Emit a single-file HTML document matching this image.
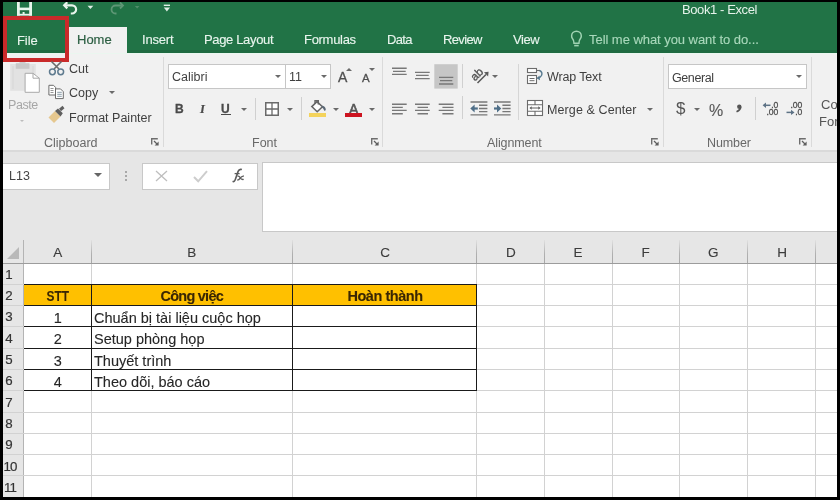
<!DOCTYPE html>
<html><head><meta charset="utf-8">
<style>
*{margin:0;padding:0;box-sizing:border-box}
html,body{width:840px;height:500px;overflow:hidden;background:#000}
body{position:relative;font-family:"Liberation Sans",sans-serif}
.a{position:absolute}
.t{position:absolute;white-space:nowrap;line-height:1;will-change:transform}
#green{left:2px;top:2px;width:835px;height:50.5px;background:#217346}
#ribbon{left:2px;top:52.5px;width:835px;height:97.5px;background:#f1f1f1}
#rbline{left:2px;top:149.5px;width:835px;height:2px;background:#dadada}
#fbar{left:2px;top:151.5px;width:835px;height:112px;background:#e6e6e6}
#grid{left:24px;top:263px;width:813px;height:234px;background:#fff}
#rowh{left:2px;top:263px;width:22px;height:234px;background:#e6e6e6}
.tab{color:#e9f5ee;font-size:13px;-webkit-text-stroke:0.12px #e9f5ee}
.grp{color:#686868;font-size:12.5px}
.rt{color:#3f3f3f;font-size:12.5px}
.sep{position:absolute;width:1px;background:#dadada}
.arr{position:absolute;width:0;height:0;border-left:3px solid transparent;border-right:3px solid transparent;border-top:3px solid #6a6a6a}
.box{position:absolute;background:#fff;border:1px solid #c6c6c6}
.hl{position:absolute;height:1px}
.vl{position:absolute;width:1px}
.ch{color:#3c3c3c;font-size:13.5px;-webkit-text-stroke:0.12px #3c3c3c}
.rh{color:#333;font-size:13.3px;-webkit-text-stroke:0.2px #333}
.cell{color:#262626;font-size:14.5px;-webkit-text-stroke:0.1px #262626}
</style></head><body>
<div class="a" id="green"></div>
<div class="a" id="ribbon"></div>
<div class="a" style="left:2px;top:50px;width:835px;height:2.5px;background:#1f6a41"></div>
<div class="a" style="left:2px;top:52.5px;width:835px;height:1.5px;background:#eaf6ef"></div>
<div class="a" id="rbline"></div>
<div class="a" id="fbar"></div>
<div class="a" id="rowh"></div>
<div class="a" id="grid"></div>

<!-- Quick access toolbar -->
<svg class="a" style="left:0;top:0" width="180" height="18" viewBox="0 0 180 18">
  <g fill="#e8f5ec">
    <rect x="17" y="2" width="2.8" height="13.6"/>
    <rect x="29.2" y="2" width="2.8" height="13.6"/>
    <rect x="17" y="7.6" width="15" height="2.6"/>
    <rect x="17" y="13.8" width="15" height="1.8"/>
    <rect x="22.6" y="12" width="2" height="2"/>
  </g>
  <path d="M64.5 5.3 H72 A4.1 4.1 0 0 1 72 13.5 H70.8" fill="none" stroke="#e8f5ec" stroke-width="2.2"/>
  <path d="M67.3 2.2 L64.2 5.3 L67.3 8.4" fill="none" stroke="#e8f5ec" stroke-width="2.2"/>
  <path d="M87.5 5.8 H93.3 L90.4 8.9 Z" fill="#e0efe6"/>
  <path d="M122.5 5.5 H115.5 A4 4 0 0 0 115.5 13.5 H116.5" fill="none" stroke="#5d9775" stroke-width="1.8"/>
  <path d="M120 2.5 L123 5.5 L120 8.5" fill="none" stroke="#5d9775" stroke-width="1.8"/>
  <path d="M134.8 6 H139.5 L137.15 8.5 Z" fill="#4f8d69"/>
  <rect x="163.8" y="4.6" width="6.2" height="1.4" fill="#e0efe6"/>
  <path d="M163.8 7.5 H170 L166.9 11.6 Z" fill="#e0efe6"/>
</svg>
<div class="t" style="left:681.5px;top:3px;font-size:13px;color:#e6f3eb;letter-spacing:-0.4px">Book1 - Excel</div>

<!-- Tabs -->
<div class="a" style="left:68px;top:27px;width:59px;height:26px;background:#f1f1f1"></div>
<div class="t tab" style="left:17px;top:34.3px;letter-spacing:-0.1px">File</div>
<div class="t tab" style="left:77px;top:33px;color:#2d5f43;-webkit-text-stroke:0.2px #2d5f43">Home</div>
<div class="t tab" style="left:142px;top:33px;letter-spacing:-0.2px">Insert</div>
<div class="t tab" style="left:203.5px;top:33px;letter-spacing:-0.35px">Page Layout</div>
<div class="t tab" style="left:304px;top:33px;letter-spacing:-0.3px">Formulas</div>
<div class="t tab" style="left:386.5px;top:33px;letter-spacing:-0.7px">Data</div>
<div class="t tab" style="left:442.5px;top:33px;letter-spacing:-0.65px">Review</div>
<div class="t tab" style="left:513px;top:33px;letter-spacing:-0.45px">View</div>
<svg class="a" style="left:566px;top:28px" width="20" height="22" viewBox="566 28 20 22">
  <path d="M574 43.3 Q574 40.5 572.6 38.8 Q571.6 37.4 571.6 36 A4.85 4.85 0 0 1 581.3 36 Q581.3 37.4 580.3 38.8 Q578.9 40.5 578.9 43.3 Z" fill="none" stroke="#9fd3b2" stroke-width="1.5"/>
  <path d="M574.2 45.6 H578.7" stroke="#9fd3b2" stroke-width="1.6"/>
</svg>
<div class="t tab" style="left:588.5px;top:33px;color:#a9d8bb;-webkit-text-stroke:0.12px #a9d8bb;letter-spacing:-0.05px">Tell me what you want to do...</div>

<!-- Red highlight box -->
<div class="a" style="left:3px;top:16px;width:66px;height:46px;border:4.5px solid #c92a2a"></div>

<!-- Clipboard group -->
<svg class="a" style="left:0;top:56px" width="68" height="72" viewBox="0 56 68 72">
  <rect x="10.2" y="64" width="25.6" height="26.8" fill="#e2e2e2"/>
  <path d="M13 66 V89 M33 66 V89" stroke="#d6d6d6" stroke-width="1"/>
  <rect x="15.8" y="63.2" width="13.6" height="5.6" fill="#c9c9c9"/>
  <rect x="19.5" y="62" width="6" height="2" fill="#cdcdcd"/>
  <path d="M25.1 73.3 H33 L39.3 78.2 V92.3 H25.1 Z" fill="#fff" stroke="#a9a9a9" stroke-width="1"/>
  <path d="M33 73.3 V78.2 H39.3" fill="none" stroke="#a9a9a9" stroke-width="1"/>
  <path d="M51.5 61.5 L59 69 M61.5 61.5 L54 69" stroke="#6b6b6b" stroke-width="1.6"/>
  <circle cx="52.4" cy="71.8" r="2.9" fill="none" stroke="#5f7b8f" stroke-width="1.5"/>
  <circle cx="60.7" cy="71.8" r="2.9" fill="none" stroke="#5f7b8f" stroke-width="1.5"/>
  <path d="M48.9 85.3 H53.5 L55.6 87.4 V95 H48.9 Z" fill="#fff" stroke="#6b6b6b" stroke-width="1"/>
  <path d="M50.5 88.5 H53.5 M50.5 90.5 H53.5 M50.5 92.5 H53.5" stroke="#8a8a8a" stroke-width="0.9"/>
  <path d="M55.5 88.9 H60.5 L63.3 91.7 V98.6 H55.5 Z" fill="#fff" stroke="#6b6b6b" stroke-width="1"/>
  <path d="M57.2 92.3 H61.8 M57.2 94.3 H61.8 M57.2 96.3 H61.8" stroke="#7a8e9c" stroke-width="0.9"/>
  <path d="M48.5 117.5 L55 111 L60.5 116.5 L54 123 Z" fill="#e6c88f"/>
  <path d="M55 111 L58 108.5 L62.8 113.3 L60.5 116.5 Z" fill="#5f5f5f"/>
  <path d="M60 110 L63.5 107" stroke="#5f5f5f" stroke-width="3"/>
</svg>
<div class="t" style="left:8px;top:99px;font-size:12.5px;color:#a6a6a6;letter-spacing:-0.45px">Paste</div>
<div class="arr" style="left:19.5px;top:119.5px;border-left-width:2.5px;border-right-width:2.5px;border-top-width:2.2px;border-top-color:#bdbdbd"></div>

<div class="t rt" style="left:68.5px;top:62.5px">Cut</div>

<div class="t rt" style="left:68.5px;top:87px">Copy</div>
<div class="arr" style="left:109px;top:91px"></div>

<div class="t rt" style="left:68.5px;top:111.5px">Format Painter</div>
<div class="t grp" style="left:43.5px;top:137px">Clipboard</div>
<svg class="a" style="left:151px;top:138.3px" width="8" height="8" viewBox="0 0 8 8">
  <path d="M0.7 6.5 V0.7 H6.8" fill="none" stroke="#6e6e6e" stroke-width="1.4"/>
  <path d="M3 3 L6.5 6.5" stroke="#5e5e5e" stroke-width="1.3"/><path d="M7.6 3.6 V7.6 H3.6 Z" fill="#5e5e5e"/>
</svg>
<div class="sep" style="left:163px;top:57px;height:90px"></div>

<!-- Font group -->
<div class="box" style="left:168px;top:64px;width:118px;height:25px"></div>
<div class="t rt" style="left:172px;top:71px">Calibri</div>
<div class="arr" style="left:275px;top:75px"></div>
<div class="box" style="left:285px;top:64px;width:46px;height:25px"></div>
<div class="t rt" style="left:289px;top:71px">11</div>
<div class="arr" style="left:321px;top:75px"></div>
<div class="t" style="left:338px;top:70px;font-size:14px;color:#4f4f4f;-webkit-text-stroke:0.3px #4f4f4f">A</div>
<div class="arr" style="left:346px;top:68px;border-top:0;border-bottom:3px solid #6a6a6a"></div>
<div class="t" style="left:362px;top:72.5px;font-size:11.5px;color:#4f4f4f;-webkit-text-stroke:0.3px #4f4f4f">A</div>
<div class="arr" style="left:369px;top:68px"></div>
<div class="sep" style="left:382px;top:57px;height:90px"></div>

<div class="t" style="left:174.5px;top:102.5px;font-size:12px;font-weight:bold;color:#4a4a4a;-webkit-text-stroke:0.3px #4a4a4a">B</div>
<div class="t" style="left:199.5px;top:102.5px;font-size:12.5px;font-style:italic;font-family:'Liberation Serif',serif;font-weight:bold;color:#4a4a4a;-webkit-text-stroke:0.2px #4a4a4a">I</div>
<div class="t" style="left:221px;top:102.5px;font-size:12px;font-weight:bold;color:#4a4a4a;-webkit-text-stroke:0.3px #4a4a4a">U</div><div class="a" style="left:221px;top:114px;width:10px;height:1.3px;background:#4a4a4a"></div>
<div class="arr" style="left:241px;top:108px"></div>
<div class="sep" style="left:255px;top:98px;height:22px;background:#d0d0d0"></div>
<svg class="a" style="left:265px;top:102px" width="14" height="14" viewBox="0 0 14 14">
  <rect x="0.75" y="0.75" width="12.5" height="12.5" fill="#fff" stroke="#6a6a6a" stroke-width="1.5"/>
  <path d="M7 1 V13 M1 7 H13" stroke="#6a6a6a" stroke-width="1.3"/>
</svg>
<div class="arr" style="left:287px;top:108px"></div>
<div class="sep" style="left:301px;top:97px;height:23px;background:#d0d0d0"></div>
<svg class="a" style="left:305px;top:96px" width="26" height="24" viewBox="305 96 26 24">
  <path d="M311.8 106.6 L317 101.6 L322.4 106.8 L317.2 111.8 Z" fill="#fff" stroke="#666" stroke-width="1.5"/>
  <path d="M315 104 V100.8 H318.3 V104.4" fill="none" stroke="#666" stroke-width="1.4"/>
  <path d="M321.5 105.4 Q325.5 106 325.8 109.5 Q325.6 111 324.3 110.8 Q323.5 108.5 322 107.5 Z" fill="#5a6774"/>
  <rect x="309" y="113" width="17" height="4" fill="#f4d35c"/>
</svg>
<div class="arr" style="left:333px;top:108px"></div>
<div class="t" style="left:348.5px;top:101.5px;font-size:14px;color:#555;-webkit-text-stroke:0.6px #555">A</div>
<div class="a" style="left:345px;top:113.4px;width:17px;height:3.8px;background:#cc1420"></div>
<div class="arr" style="left:369px;top:108px"></div>
<div class="t grp" style="left:252px;top:136.5px">Font</div>
<svg class="a" style="left:371px;top:138.3px" width="8" height="8" viewBox="0 0 8 8">
  <path d="M0.7 6.5 V0.7 H6.8" fill="none" stroke="#6e6e6e" stroke-width="1.4"/>
  <path d="M3 3 L6.5 6.5" stroke="#5e5e5e" stroke-width="1.3"/><path d="M7.6 3.6 V7.6 H3.6 Z" fill="#5e5e5e"/>
</svg>

<!-- Alignment -->
<svg class="a" style="left:386px;top:60px" width="130" height="60" viewBox="386 60 130 60">
  <rect x="434.3" y="64.2" width="23.4" height="24.4" fill="#c6c6c6"/>
  <g stroke="#787878" stroke-width="1.35">
    <path d="M392 68.2 H406.7 M393 71.4 H405.7 M392 74.4 H406.7"/>
    <path d="M415 72.4 H429.7 M416 75.4 H428.7 M415 78.6 H429.7"/>
    <path d="M439 77.4 H453.3 M440 80.6 H452.3 M439 84 H453.3"/>
    <path d="M392 104.2 H406.7 M392 107.4 H402.8 M392 110.4 H406.7 M392 113.7 H402.8"/>
    <path d="M415 104.2 H429.7 M417.5 107.4 H428 M415 110.4 H429.7 M417.5 113.7 H428"/>
    <path d="M438.7 104.2 H453.5 M442.4 107.4 H453.5 M438.7 110.4 H453.5 M442.4 113.7 H453.5"/>
    <path d="M470.5 102 H487.4 M479 105.2 H487.4 M479 108.5 H487.4 M479 111.6 H487.4 M470.5 114.9 H487.4"/>
    <path d="M494 102 H510.6 M502.4 105.2 H510.6 M502.4 108.5 H510.6 M502.4 111.6 H510.6 M494 114.9 H510.6"/>
  </g>
  <path d="M472.5 108.5 H477.8" stroke="#4f6f88" stroke-width="2.2"/>
  <path d="M470.3 108.5 L474.6 104.6 V112.4 Z" fill="#4f6f88"/>
  <path d="M494 108.5 H499" stroke="#4f6f88" stroke-width="2.2"/>
  <path d="M501.3 108.5 L497 104.6 V112.4 Z" fill="#4f6f88"/>
</svg>
<div class="sep" style="left:462px;top:64px;height:24px;background:#d0d0d0"></div>
<div class="sep" style="left:462px;top:96px;height:23px;background:#d0d0d0"></div>
<svg class="a" style="left:466px;top:62px" width="26" height="26" viewBox="466 62 26 26">
  <text x="476.8" y="78" font-size="11.5" font-family="Liberation Sans" fill="#505050" stroke="#505050" stroke-width="0.35" text-anchor="middle" transform="rotate(-45 476.8 74.2)">ab</text>
  <path d="M477.5 83 L486 74.5" stroke="#5a5a5a" stroke-width="1.6"/>
  <path d="M484 72.3 L488.6 71.8 L488.1 76.4 Z" fill="#5a5a5a"/>
</svg>
<div class="arr" style="left:492px;top:75px"></div>
<div class="sep" style="left:518px;top:64px;height:56px;background:#d6d6d6"></div>
<svg class="a" style="left:522px;top:64px" width="24" height="56" viewBox="522 64 24 56">
  <rect x="527.5" y="68.5" width="9" height="4" fill="#fff" stroke="#6c6c6c" stroke-width="1.1"/>
  <path d="M536.5 70.5 H540" stroke="#6c6c6c" stroke-width="1.1"/>
  <rect x="527.5" y="75.5" width="9" height="8" fill="#fff" stroke="#6c6c6c" stroke-width="1.1"/>
  <path d="M529.5 78.5 H534.5 M529.5 80.7 H534.5" stroke="#6c6c6c" stroke-width="1"/>
  <path d="M539.5 70.5 Q543 72 541.5 75.5 Q540.5 77.5 537.5 78.2" fill="none" stroke="#56798f" stroke-width="1.4"/>
  <path d="M536.6 78.3 L539.5 75.6 L540 80.3 Z" fill="#56798f"/>
  <rect x="527.5" y="100.5" width="15" height="15" fill="#fff" stroke="#6c6c6c" stroke-width="1.1"/>
  <path d="M527.5 104.7 H542.5 M527.5 111.3 H542.5 M535 100.5 V104.7 M535 111.3 V115.5" stroke="#6c6c6c" stroke-width="1.1"/>
  <path d="M530 108 H540" stroke="#6c6c6c" stroke-width="1.1"/>
  <path d="M529.3 108 L531.8 106.2 V109.8 Z M540.7 108 L538.2 106.2 V109.8 Z" fill="#6c6c6c"/>
</svg>
<div class="t rt" style="left:547px;top:71px;letter-spacing:-0.15px">Wrap Text</div>

<div class="t rt" style="left:546.5px;top:103.5px;letter-spacing:0.1px">Merge &amp; Center</div>
<div class="arr" style="left:647px;top:108px"></div>
<div class="t grp" style="left:487px;top:136.5px;letter-spacing:-0.1px">Alignment</div>
<svg class="a" style="left:651px;top:138.3px" width="8" height="8" viewBox="0 0 8 8">
  <path d="M0.7 6.5 V0.7 H6.8" fill="none" stroke="#6e6e6e" stroke-width="1.4"/>
  <path d="M3 3 L6.5 6.5" stroke="#5e5e5e" stroke-width="1.3"/><path d="M7.6 3.6 V7.6 H3.6 Z" fill="#5e5e5e"/>
</svg>
<div class="sep" style="left:663px;top:57px;height:90px"></div>

<!-- Number -->
<div class="box" style="left:668px;top:64px;width:139px;height:25px"></div>
<div class="t rt" style="left:672px;top:71.5px;letter-spacing:-0.4px">General</div>
<div class="arr" style="left:796px;top:75px"></div>
<div class="t" style="left:675.5px;top:100px;font-size:17px;color:#555;-webkit-text-stroke:0px #555">$</div>
<div class="arr" style="left:694px;top:108px"></div>
<div class="t" style="left:709px;top:102.5px;font-size:16px;color:#5a5a5a;-webkit-text-stroke:0.15px #5a5a5a">%</div>
<svg class="a" style="left:734px;top:103px" width="9" height="10" viewBox="734 103 9 10"><circle cx="739.3" cy="106.8" r="2.2" fill="#555"/><path d="M740.6 106.8 Q740.8 110 736.5 111.8" fill="none" stroke="#555" stroke-width="1.7"/></svg>
<div class="sep" style="left:755px;top:97px;height:23px;background:#d0d0d0"></div>
<svg class="a" style="left:756px;top:96px" width="54" height="26" viewBox="756 96 54 26">
  <g font-family="Liberation Sans" font-size="8.6" fill="#4f4f4f" stroke="#4f4f4f" stroke-width="0.3" text-anchor="end">
    <text x="778.4" y="108">.0</text>
    <text x="778.4" y="115.4">.00</text>
    <text x="802.4" y="108">.00</text>
    <text x="802.4" y="115.4">.0</text>
  </g>
  <path d="M764.5 105.3 H770.5" stroke="#5d7285" stroke-width="1.5"/>
  <path d="M762.6 105.3 L766 102.6 V108 Z" fill="#5d7285"/>
  <path d="M786.5 112.4 H792.5" stroke="#5d7285" stroke-width="1.5"/>
  <path d="M794.5 112.4 L791 109.7 V115.1 Z" fill="#5d7285"/>
</svg>
<div class="t grp" style="left:707px;top:137px;letter-spacing:-0.1px">Number</div>
<svg class="a" style="left:799px;top:138.3px" width="8" height="8" viewBox="0 0 8 8">
  <path d="M0.7 6.5 V0.7 H6.8" fill="none" stroke="#6e6e6e" stroke-width="1.4"/>
  <path d="M3 3 L6.5 6.5" stroke="#5e5e5e" stroke-width="1.3"/><path d="M7.6 3.6 V7.6 H3.6 Z" fill="#5e5e5e"/>
</svg>
<div class="sep" style="left:811px;top:57px;height:90px"></div>
<div class="t rt" style="left:821px;top:98px;font-size:13px;color:#555">Co</div>
<div class="t rt" style="left:819px;top:115px;font-size:13px;color:#555">For</div>

<!-- Formula bar -->
<div class="box" style="left:2px;top:162.5px;width:108px;height:27px;border-color:#c8c8c8;border-left:0"></div>
<div class="t" style="left:9px;top:170px;font-size:12.5px;color:#444">L13</div>
<div class="arr" style="left:94px;top:173px;border-left-width:4px;border-right-width:4px;border-top-width:4px;border-top-color:#666"></div>
<div class="a" style="left:125px;top:171px;width:2px;height:2px;background:#a8a8a8"></div>
<div class="a" style="left:125px;top:175px;width:2px;height:2px;background:#a8a8a8"></div>
<div class="a" style="left:125px;top:179px;width:2px;height:2px;background:#a8a8a8"></div>
<div class="box" style="left:141.5px;top:162.5px;width:116px;height:27px;border-color:#c8c8c8"></div>
<svg class="a" style="left:155px;top:170px" width="13" height="12" viewBox="0 0 13 12">
  <path d="M1 1 L12 11 M12 1 L1 11" stroke="#bebebe" stroke-width="1.3"/>
</svg>
<svg class="a" style="left:193px;top:170px" width="15" height="13" viewBox="0 0 15 13">
  <path d="M1 7 L5.2 11.3 L14 1.2" fill="none" stroke="#cdcdcd" stroke-width="2"/>
</svg>
<svg class="a" style="left:226px;top:164px" width="24" height="22" viewBox="226 164 24 22">
  <path d="M232.6 181.3 Q234.4 182.3 235.3 179.6 L238.1 171.4 Q239.2 168.6 241.9 169.6" fill="none" stroke="#5c5c5c" stroke-width="1.6"/>
  <path d="M234.6 173.6 H239.6" stroke="#5c5c5c" stroke-width="1.3"/>
  <path d="M237.4 176.2 Q239.2 175.6 240.1 177.6 Q241.1 179.9 243.7 179.4" fill="none" stroke="#5c5c5c" stroke-width="1.3"/>
  <path d="M243.9 175.9 Q241.3 176.4 240.1 178.1 Q239.1 179.9 237.2 180.1" fill="none" stroke="#5c5c5c" stroke-width="1.3"/>
</svg>
<div class="box" style="left:262px;top:162px;width:576px;height:69.5px;border-color:#c8c8c8"></div>

<!-- Column headers -->
<div class="a" style="left:2px;top:240px;width:835px;height:23px;background:#e6e6e6"></div>
<svg class="a" style="left:7px;top:247px" width="13" height="13" viewBox="0 0 13 13"><path d="M12 0 V12 H0 Z" fill="#b9b9b9"/></svg>
<div class="vl" style="left:23px;top:240px;height:257px;background:#b4b4b4"></div>
<div class="hl" style="left:2px;top:263px;width:835px;background:#9c9c9c"></div>

<!-- gridlines vertical -->
<div class="vl" style="left:91px;top:240px;height:23px;background:linear-gradient(#e0e0e0,#b0b0b0 60%,#a8a8a8)"></div>
<div class="vl" style="left:292px;top:240px;height:23px;background:linear-gradient(#e0e0e0,#b0b0b0 60%,#a8a8a8)"></div>
<div class="vl" style="left:476px;top:240px;height:23px;background:linear-gradient(#e0e0e0,#b0b0b0 60%,#a8a8a8)"></div>
<div class="vl" style="left:544px;top:240px;height:23px;background:linear-gradient(#e0e0e0,#b0b0b0 60%,#a8a8a8)"></div>
<div class="vl" style="left:612px;top:240px;height:23px;background:linear-gradient(#e0e0e0,#b0b0b0 60%,#a8a8a8)"></div>
<div class="vl" style="left:679px;top:240px;height:23px;background:linear-gradient(#e0e0e0,#b0b0b0 60%,#a8a8a8)"></div>
<div class="vl" style="left:747px;top:240px;height:23px;background:linear-gradient(#e0e0e0,#b0b0b0 60%,#a8a8a8)"></div>
<div class="vl" style="left:815px;top:240px;height:23px;background:linear-gradient(#e0e0e0,#b0b0b0 60%,#a8a8a8)"></div>

<div class="vl" style="left:91px;top:264px;height:233px;background:#d2d2d2"></div>
<div class="vl" style="left:292px;top:264px;height:233px;background:#d2d2d2"></div>
<div class="vl" style="left:476px;top:264px;height:233px;background:#d2d2d2"></div>
<div class="vl" style="left:544px;top:264px;height:233px;background:#d2d2d2"></div>
<div class="vl" style="left:612px;top:264px;height:233px;background:#d2d2d2"></div>
<div class="vl" style="left:679px;top:264px;height:233px;background:#d2d2d2"></div>
<div class="vl" style="left:747px;top:264px;height:233px;background:#d2d2d2"></div>
<div class="vl" style="left:815px;top:264px;height:233px;background:#d2d2d2"></div>

<!-- gridlines horizontal -->
<div class="hl" style="left:2px;top:284px;width:835px;background:#d2d2d2"></div>
<div class="hl" style="left:2px;top:305px;width:835px;background:#d2d2d2"></div>
<div class="hl" style="left:2px;top:326px;width:835px;background:#d2d2d2"></div>
<div class="hl" style="left:2px;top:348px;width:835px;background:#d2d2d2"></div>
<div class="hl" style="left:2px;top:369px;width:835px;background:#d2d2d2"></div>
<div class="hl" style="left:2px;top:390px;width:835px;background:#d2d2d2"></div>
<div class="hl" style="left:2px;top:412px;width:835px;background:#d2d2d2"></div>
<div class="hl" style="left:2px;top:433px;width:835px;background:#d2d2d2"></div>
<div class="hl" style="left:2px;top:454px;width:835px;background:#d2d2d2"></div>
<div class="hl" style="left:2px;top:475px;width:835px;background:#d2d2d2"></div>

<!-- Header texts -->
<div class="t ch" style="left:23.5px;width:67.5px;text-align:center;top:246px">A</div>
<div class="t ch" style="left:91.0px;width:201.5px;text-align:center;top:246px">B</div>
<div class="t ch" style="left:292.5px;width:184.0px;text-align:center;top:246px">C</div>
<div class="t ch" style="left:476.5px;width:67.5px;text-align:center;top:246px">D</div>
<div class="t ch" style="left:544.0px;width:68.0px;text-align:center;top:246px">E</div>
<div class="t ch" style="left:612.0px;width:67.3px;text-align:center;top:246px">F</div>
<div class="t ch" style="left:679.3px;width:68.4px;text-align:center;top:246px">G</div>
<div class="t ch" style="left:747.7px;width:68.0px;text-align:center;top:246px">H</div>
<div class="t rh" style="left:-4.2px;width:26px;text-align:center;top:268.0px">1</div>
<div class="t rh" style="left:-4.2px;width:26px;text-align:center;top:289.0px">2</div>
<div class="t rh" style="left:-4.2px;width:26px;text-align:center;top:310.0px">3</div>
<div class="t rh" style="left:-4.2px;width:26px;text-align:center;top:331.5px">4</div>
<div class="t rh" style="left:-4.2px;width:26px;text-align:center;top:353.0px">5</div>
<div class="t rh" style="left:-4.2px;width:26px;text-align:center;top:374.0px">6</div>
<div class="t rh" style="left:-4.2px;width:26px;text-align:center;top:395.5px">7</div>
<div class="t rh" style="left:-4.2px;width:26px;text-align:center;top:417.0px">8</div>
<div class="t rh" style="left:-4.2px;width:26px;text-align:center;top:438.0px">9</div>
<div class="t rh" style="left:-3.4px;width:26px;text-align:center;top:459.5px;letter-spacing:-1px">10</div>
<div class="t rh" style="left:-3.4px;width:26px;text-align:center;top:480.5px;letter-spacing:-1px">11</div>

<!-- Table -->
<div class="a" style="left:24px;top:284px;width:453px;height:22px;background:#ffc000"></div>
<div class="hl" style="left:24px;top:284px;width:453px;background:#1a1a1a"></div>
<div class="hl" style="left:24px;top:305px;width:453px;background:#1a1a1a"></div>
<div class="hl" style="left:24px;top:326px;width:453px;background:#1a1a1a"></div>
<div class="hl" style="left:24px;top:348px;width:453px;background:#1a1a1a"></div>
<div class="hl" style="left:24px;top:369px;width:453px;background:#1a1a1a"></div>
<div class="hl" style="left:24px;top:390px;width:453px;background:#1a1a1a"></div>
<div class="vl" style="left:91px;top:284px;height:107px;background:#1a1a1a"></div>
<div class="vl" style="left:292px;top:284px;height:107px;background:#1a1a1a"></div>
<div class="vl" style="left:476px;top:284px;height:107px;background:#1a1a1a"></div>

<div class="t cell" style="left:23.5px;width:67.5px;text-align:center;top:289.1px;font-weight:bold;color:#3b2600;"><span style="display:inline-block;transform:scaleX(0.82)">STT</span></div>
<div class="t cell" style="left:91.0px;width:201.5px;text-align:center;top:289.1px;font-weight:bold;color:#3b2600;letter-spacing:-0.75px">Công việc</div>
<div class="t cell" style="left:292.5px;width:184.0px;text-align:center;top:289.1px;font-weight:bold;color:#3b2600;letter-spacing:-0.45px">Hoàn thành</div>
<div class="t cell" style="left:23.5px;width:67.5px;text-align:center;top:310.7px;">1</div>
<div class="t cell" style="left:94.0px;top:310.7px;">Chuẩn bị tài liệu cuộc họp</div>
<div class="t cell" style="left:23.5px;width:67.5px;text-align:center;top:332.2px;">2</div>
<div class="t cell" style="left:94.0px;top:332.2px;">Setup phòng họp</div>
<div class="t cell" style="left:23.5px;width:67.5px;text-align:center;top:353.7px;">3</div>
<div class="t cell" style="left:94.0px;top:353.7px;">Thuyết trình</div>
<div class="t cell" style="left:23.5px;width:67.5px;text-align:center;top:374.7px;">4</div>
<div class="t cell" style="left:94.0px;top:374.7px;">Theo dõi, báo cáo</div>

<div class="a" style="left:0;top:0;width:840px;height:2px;background:#000"></div>
<div class="a" style="left:0;top:0;width:2.5px;height:500px;background:#000"></div>
<div class="a" style="left:837px;top:0;width:3px;height:500px;background:#000"></div>
<div class="a" style="left:0;top:497px;width:840px;height:3px;background:#000"></div>
</body></html>
